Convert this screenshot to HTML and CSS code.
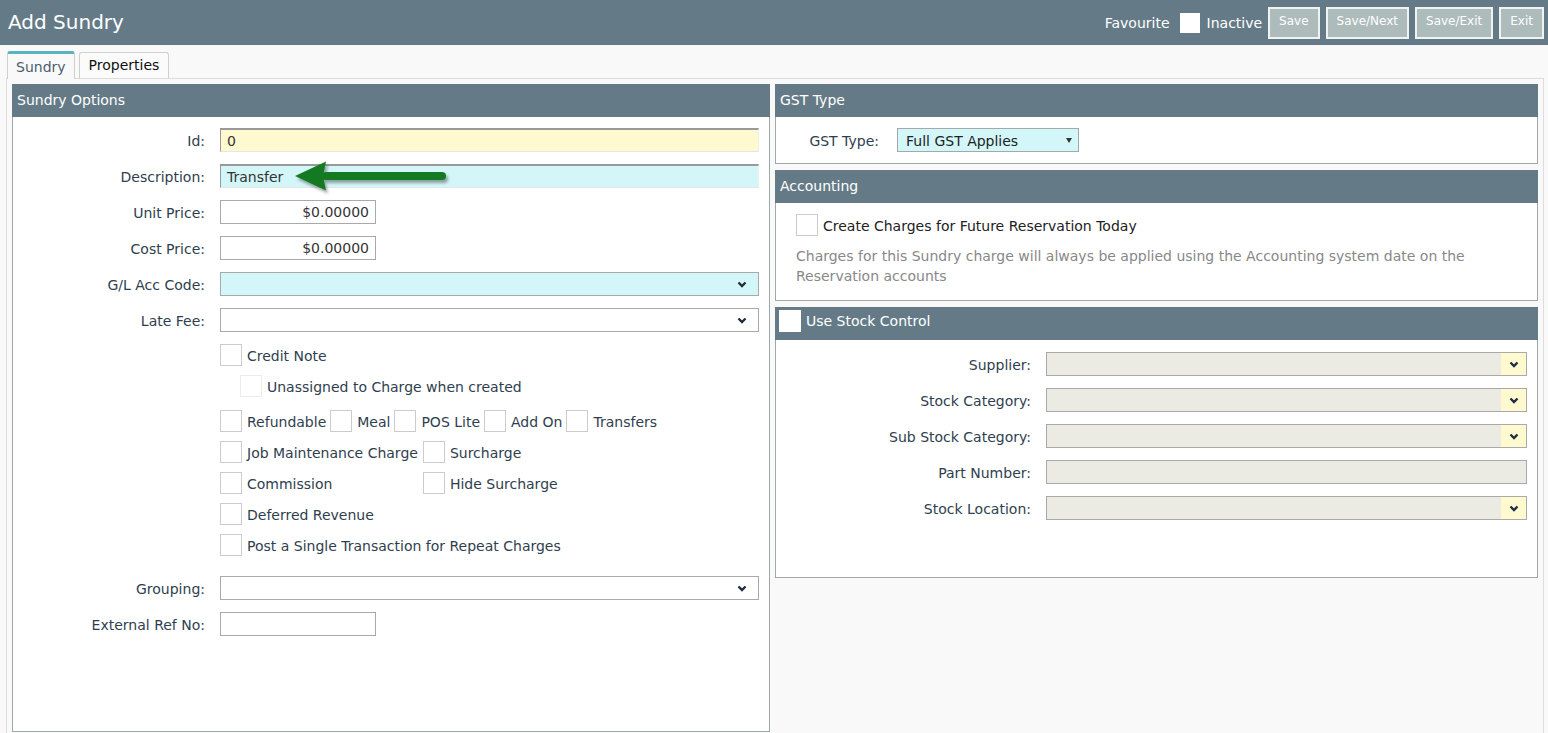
FILE: index.html
```html
<!DOCTYPE html>
<html lang="en">
<head>
<meta charset="utf-8">
<title>Add Sundry</title>
<link rel="stylesheet" href="styles.css">
</head>
<body>
<header class="topbar">
  <h1 class="title">Add Sundry</h1>
  <div class="actions">
    <span class="hdr-label">Favourite</span>
    <span class="hdr-check"></span>
    <span class="hdr-label">Inactive</span>
    <button class="btn btn-save">Save</button>
    <button class="btn">Save/Next</button>
    <button class="btn">Save/Exit</button>
    <button class="btn">Exit</button>
  </div>
</header>

<main class="main">
  <nav class="tabs">
    <div class="tab active">Sundry</div>
    <div class="tab">Properties</div>
  </nav>
  <div class="content">
    <section class="panel panel-left">
      <div class="panel-head">Sundry Options</div>
      <div class="panel-body left-body">
        <div class="field"><label>Id:</label><div class="input inset yellow">0</div></div>
        <div class="field"><label>Description:</label>
          <div class="arrow-wrap">
            <div class="input inset cyan">Transfer</div>
            <svg class="arrow" width="160" height="40" viewBox="0 0 160 40">
              <line x1="36" y1="18" x2="152" y2="18" stroke="#137a22" stroke-width="8" stroke-linecap="round"/>
              <polygon points="5,18 36,3.5 33,18 36,32.5" fill="#137a22"/>
            </svg>
          </div>
        </div>
        <div class="field"><label>Unit Price:</label><div class="input short right">$0.00000</div></div>
        <div class="field"><label>Cost Price:</label><div class="input short right">$0.00000</div></div>
        <div class="field"><label>G/L Acc Code:</label><div class="input select cyan"><svg class="chev" width="10" height="7" viewBox="0 0 10 7"><polyline points="1.5,1.5 5,5 8.5,1.5" fill="none" stroke="#1f2d3d" stroke-width="2.4"/></svg></div></div>
        <div class="field"><label>Late Fee:</label><div class="input select"><svg class="chev" width="10" height="7" viewBox="0 0 10 7"><polyline points="1.5,1.5 5,5 8.5,1.5" fill="none" stroke="#1f2d3d" stroke-width="2.4"/></svg></div></div>

        <div class="checks">
          <div class="crow"><span class="box"></span><span class="clabel">Credit Note</span></div>
          <div class="crow indent gap-after"><span class="box disabled"></span><span class="clabel">Unassigned to Charge when created</span></div>
          <div class="crow"><span class="box"></span><span class="clabel">Refundable</span><span class="box"></span><span class="clabel">Meal</span><span class="box"></span><span class="clabel">POS Lite</span><span class="box"></span><span class="clabel">Add On</span><span class="box"></span><span class="clabel">Transfers</span></div>
          <div class="cgrid">
            <div class="crow"><span class="box"></span><span class="clabel">Job Maintenance Charge</span></div>
            <div class="crow"><span class="box"></span><span class="clabel">Surcharge</span></div>
            <div class="crow"><span class="box"></span><span class="clabel">Commission</span></div>
            <div class="crow"><span class="box"></span><span class="clabel">Hide Surcharge</span></div>
          </div>
          <div class="crow"><span class="box"></span><span class="clabel">Deferred Revenue</span></div>
          <div class="crow"><span class="box"></span><span class="clabel">Post a Single Transaction for Repeat Charges</span></div>
        </div>

        <div class="field"><label>Grouping:</label><div class="input select"><svg class="chev" width="10" height="7" viewBox="0 0 10 7"><polyline points="1.5,1.5 5,5 8.5,1.5" fill="none" stroke="#1f2d3d" stroke-width="2.4"/></svg></div></div>
        <div class="field"><label>External Ref No:</label><div class="input short"></div></div>
      </div>
    </section>

    <div class="right-col">
      <section class="panel">
        <div class="panel-head">GST Type</div>
        <div class="panel-body gst-body">
          <label>GST Type:</label>
          <div class="gst-select">Full GST Applies<span class="tri"></span></div>
        </div>
      </section>

      <section class="panel gap-top">
        <div class="panel-head">Accounting</div>
        <div class="panel-body acc-body">
          <div class="crow"><span class="box"></span><span class="clabel dark">Create Charges for Future Reservation Today</span></div>
          <p class="note">Charges for this Sundry charge will always be applied using the Accounting system date on the Reservation accounts</p>
        </div>
      </section>

      <section class="panel gap-top">
        <div class="panel-head stock-head"><span class="head-check"></span>Use Stock Control</div>
        <div class="panel-body stock-body">
          <div class="sfield"><label>Supplier:</label><div class="sinput"><span class="sbtn"><svg width="10" height="7" viewBox="0 0 10 7"><polyline points="1.5,1.5 5,5 8.5,1.5" fill="none" stroke="#1f2d3d" stroke-width="2.4"/></svg></span></div></div>
          <div class="sfield"><label>Stock Category:</label><div class="sinput"><span class="sbtn"><svg width="10" height="7" viewBox="0 0 10 7"><polyline points="1.5,1.5 5,5 8.5,1.5" fill="none" stroke="#1f2d3d" stroke-width="2.4"/></svg></span></div></div>
          <div class="sfield"><label>Sub Stock Category:</label><div class="sinput"><span class="sbtn"><svg width="10" height="7" viewBox="0 0 10 7"><polyline points="1.5,1.5 5,5 8.5,1.5" fill="none" stroke="#1f2d3d" stroke-width="2.4"/></svg></span></div></div>
          <div class="sfield"><label>Part Number:</label><div class="sinput"></div></div>
          <div class="sfield"><label>Stock Location:</label><div class="sinput"><span class="sbtn"><svg width="10" height="7" viewBox="0 0 10 7"><polyline points="1.5,1.5 5,5 8.5,1.5" fill="none" stroke="#1f2d3d" stroke-width="2.4"/></svg></span></div></div>
        </div>
      </section>
    </div>
  </div>
</main>
</body>
</html>
```
FILE: styles.css
```css
* { box-sizing: border-box; }
html, body { margin: 0; padding: 0; }
body {
  font-family: "DejaVu Sans", Verdana, sans-serif;
  font-size: 14px;
  color: #2f3e4e;
  background: #f9f9f9;
  overflow: hidden;
}

/* top bar */
.topbar {
  height: 45px;
  background: #647b87;
  display: flex;
  align-items: center;
  justify-content: space-between;
  padding: 0 4px 0 8px;
}
.title {
  margin: 0;
  font-size: 20px;
  font-weight: normal;
  color: #fff;
  line-height: 1;
  position: relative;
  top: -1px;
}
.actions {
  display: flex;
  align-items: center;
}
.hdr-label { color: #fff; font-size: 14px; }
.hdr-check {
  width: 20px; height: 20px;
  background: #fff;
  margin: 0 7px 0 10px;
}
.btn {
  font-family: "DejaVu Sans", Verdana, sans-serif;
  font-size: 12px;
  color: #fff;
  background: #adbbbb;
  border: 2px solid #f1f3f3;
  height: 32px;
  padding: 0 9px 3px;
  margin-left: 6px;
  cursor: pointer;
}
.btn-save { margin-left: 6px; }

/* main */
.main { padding: 6px 4px 0 6px; }
.tabs {
  display: flex;
  align-items: flex-end;
  gap: 4px;
  padding-left: 1px;
  margin-bottom: -1px;
  height: 28px;
  position: relative;
  z-index: 1;
}
.tab {
  border: 1px solid #cfcfcf;
  border-radius: 3px 3px 0 0;
  font-size: 14px;
}
.tab.active {
  height: 28px;
  border-top: 3px solid #5ab4c0;
  border-bottom: none;
  background: #f9f9f9;
  color: #4e5d6c;
  padding: 5px 8px 0;
}
.tab:not(.active) {
  height: 27px;
  background: #fbfbfb;
  color: #111;
  border-bottom-color: #dddddd;
  padding: 4px 9px 0;
}
.content {
  border: 1px solid #dddddd;
  padding: 5px;
  display: grid;
  grid-template-columns: 758px 1fr;
  column-gap: 5px;
  align-items: start;
}

/* panels */
.panel-head {
  height: 33px;
  line-height: 32px;
  background: #647b87;
  color: #fff;
  padding-left: 5px;
}
.panel-body {
  background: #fff;
  border: 1px solid #9ea8a8;
  border-top: none;
}
.gap-top { margin-top: 6px; }

.left-body {
  height: 615px;
  padding: 11px 10px 0 0;
}
.field {
  display: grid;
  grid-template-columns: 192px 1fr;
  column-gap: 15px;
  align-items: center;
  margin-bottom: 12px;
}
.field label { text-align: right; position: relative; top: 0.5px; }
.input {
  height: 24px;
  border: 1px solid #a9a9a9;
  background: #fff;
  color: #333;
  padding: 0 6px;
  line-height: 23px;
  position: relative;
}
.input.inset {
  border-top: 2px solid #999;
  border-left: 1px solid #9a9a9a;
  border-right: 1px solid #eeeeee;
  border-bottom: 1px solid #e6e6e6;
  line-height: 23px;
}
.yellow { background: #fff9d0; }
.cyan { background: #d3f6f9; }
.input.short { width: 156px; }
.input.right { text-align: right; }
.input.select .chev {
  position: absolute;
  right: 11px;
  top: 8px;
}
.arrow-wrap { position: relative; }
.arrow {
  position: absolute;
  left: 70px;
  top: -6px;
  overflow: visible;
  filter: drop-shadow(2px 3px 1.5px rgba(0,0,0,0.35));
}

/* checkboxes */
.checks {
  margin: 0 0 20px 207px;
}
.crow {
  display: flex;
  align-items: center;
  height: 22px;
  margin-bottom: 9px;
}
.crow.indent { padding-left: 20px; }
.crow.gap-after { margin-bottom: 13px; }
.box {
  width: 22px; height: 22px;
  border: 1px solid #cccccc;
  background: #fff;
  flex: none;
}
.box.disabled { border-color: #ececec; }
.clabel { margin: 0 4px 0 5px; position: relative; top: 0.5px; }
.clabel.dark { color: #222; }
.cgrid {
  display: grid;
  grid-template-columns: max-content max-content;
  column-gap: 1px;
}
.checks > .crow:last-child { margin-bottom: 0; }

/* GST */
.gst-body {
  display: grid;
  grid-template-columns: 106px 182px;
  column-gap: 15px;
  align-items: center;
  padding: 11px 0;
}
.gst-body label { text-align: right; position: relative; left: -3px; top: 0.5px; }
.gst-select {
  height: 24px;
  border: 1px solid #a3a8a8;
  background: #d3f6f9;
  color: #222;
  padding: 0 8px;
  line-height: 24px;
  position: relative;
}
.tri {
  position: absolute;
  right: 6px;
  top: 9px;
  width: 0; height: 0;
  border-left: 3px solid transparent;
  border-right: 3px solid transparent;
  border-top: 5px solid #333;
}

/* accounting */
.acc-body { padding: 11px 20px 14px 20px; }
.acc-body .crow { margin-bottom: 10px; }
.note {
  margin: 0;
  color: #888888;
  line-height: 20px;
}

/* stock */
.stock-head {
  display: flex;
  align-items: flex-start;
  padding-left: 4px;
  line-height: 28px;
}
.head-check {
  width: 22px; height: 22px;
  background: #fff;
  margin: 3px 5px 0 0;
}
.stock-body {
  height: 238px;
  padding: 12px 10px 0 0;
}
.sfield {
  display: grid;
  grid-template-columns: 255px 1fr;
  column-gap: 15px;
  align-items: center;
  margin-bottom: 12px;
}
.sfield label { text-align: right; position: relative; top: 0.5px; }
.sinput {
  height: 24px;
  border: 1px solid #a9a9a9;
  background: #ebebe4;
  display: flex;
  justify-content: flex-end;
}
.sbtn {
  width: 25px;
  height: 22px;
  background: #fff9d0;
  display: flex;
  align-items: center;
  justify-content: center;
}
```
